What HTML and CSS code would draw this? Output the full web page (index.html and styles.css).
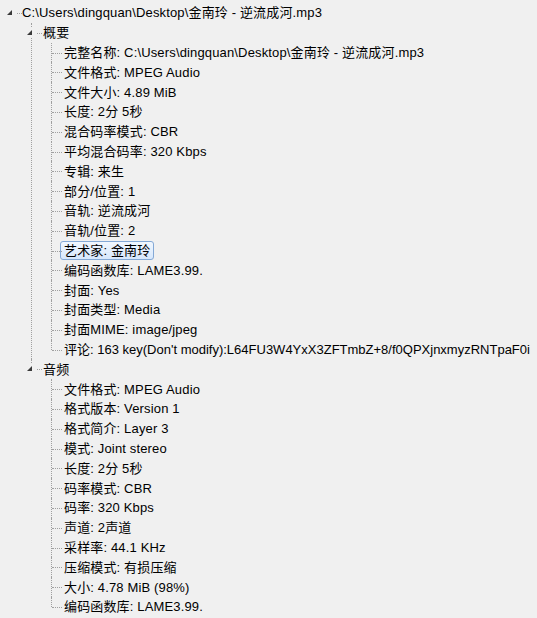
FILE: index.html
```html
<!DOCTYPE html>
<html lang="zh-CN">
<head>
    <meta charset="UTF-8">
    <meta name="viewport" content="width=device-width, initial-scale=1.0">
    <title>媒体信息</title>
    <link rel="stylesheet" href="styles.css">
</head>
<body>
    <ul class="tree">
        <li>
            <div class="row"><span class="toggle"></span><span class="label">C:\Users\dingquan\Desktop\金南玲 - 逆流成河.mp3</span></div>
            <ul>
                <li>
                    <div class="row"><span class="toggle"></span><span class="label">概要</span></div>
                    <ul>
                        <li><div class="row"><span class="label">完整名称: C:\Users\dingquan\Desktop\金南玲 - 逆流成河.mp3</span></div></li>
                        <li><div class="row"><span class="label">文件格式: MPEG Audio</span></div></li>
                        <li><div class="row"><span class="label">文件大小: 4.89 MiB</span></div></li>
                        <li><div class="row"><span class="label">长度: 2分 5秒</span></div></li>
                        <li><div class="row"><span class="label">混合码率模式: CBR</span></div></li>
                        <li><div class="row"><span class="label">平均混合码率: 320 Kbps</span></div></li>
                        <li><div class="row"><span class="label">专辑: 来生</span></div></li>
                        <li><div class="row"><span class="label">部分/位置: 1</span></div></li>
                        <li><div class="row"><span class="label">音轨: 逆流成河</span></div></li>
                        <li><div class="row"><span class="label">音轨/位置: 2</span></div></li>
                        <li><div class="row selected"><span class="label">艺术家: 金南玲</span></div></li>
                        <li><div class="row"><span class="label">编码函数库: LAME3.99.</span></div></li>
                        <li><div class="row"><span class="label">封面: Yes</span></div></li>
                        <li><div class="row"><span class="label">封面类型: Media</span></div></li>
                        <li><div class="row"><span class="label">封面MIME: image/jpeg</span></div></li>
                        <li><div class="row"><span class="label long">评论: 163 key(Don't modify):L64FU3W4YxX3ZFTmbZ+8/f0QPXjnxmyzRNTpaF0i</span></div></li>
                    </ul>
                </li>
                <li>
                    <div class="row"><span class="toggle"></span><span class="label">音频</span></div>
                    <ul>
                        <li><div class="row"><span class="label">文件格式: MPEG Audio</span></div></li>
                        <li><div class="row"><span class="label">格式版本: Version 1</span></div></li>
                        <li><div class="row"><span class="label">格式简介: Layer 3</span></div></li>
                        <li><div class="row"><span class="label">模式: Joint stereo</span></div></li>
                        <li><div class="row"><span class="label">长度: 2分 5秒</span></div></li>
                        <li><div class="row"><span class="label">码率模式: CBR</span></div></li>
                        <li><div class="row"><span class="label">码率: 320 Kbps</span></div></li>
                        <li><div class="row"><span class="label">声道: 2声道</span></div></li>
                        <li><div class="row"><span class="label">采样率: 44.1 KHz</span></div></li>
                        <li><div class="row"><span class="label">压缩模式: 有损压缩</span></div></li>
                        <li><div class="row"><span class="label">大小: 4.78 MiB (98%)</span></div></li>
                        <li><div class="row"><span class="label">编码函数库: LAME3.99.</span></div></li>
                    </ul>
                </li>
            </ul>
        </li>
    </ul>
</body>
</html>
```

FILE: styles.css
```css
html, body {
    margin: 0;
    padding: 0;
    background: #f0f0f0;
    overflow: hidden;
}

body {
    padding-top: 3px;
    font-family: "Liberation Sans", "Noto Sans CJK SC", sans-serif;
    font-size: 13px;
    letter-spacing: 0.15px;
    color: #000;
}

.tree,
.tree ul {
    list-style: none;
    margin: 0;
    padding: 0;
}

.tree ul {
    padding-left: 20px;
}

.tree li {
    position: relative;
}

/* vertical line joining siblings */
.tree ul > li::before {
    content: '';
    position: absolute;
    left: 11px;
    top: 0;
    bottom: 0;
    border-left: 1px dotted #a0a0a0;
}

.tree ul > li:last-child::before {
    bottom: auto;
    height: 10px;
}

.row {
    position: relative;
    height: 19.8px;
    display: flex;
    align-items: center;
    padding-left: 22px;
    white-space: nowrap;
}

.tree ul .row {
    padding-left: 23px;
}

.tree ul ul .row {
    padding-left: 24px;
}

/* horizontal stub */
.row::before {
    content: '';
    position: absolute;
    left: 12px;
    top: 10px;
    width: 10px;
    border-top: 1px dotted #a0a0a0;
}

.toggle {
    position: absolute;
    left: 6px;
    top: 5px;
    width: 10px;
    height: 10px;
    background: #f0f0f0;
    z-index: 1;
}

.toggle::after {
    content: '';
    position: absolute;
    left: 1px;
    top: 2px;
    width: 0;
    height: 0;
    border-style: solid;
    border-width: 0 0 5px 5px;
    border-color: transparent transparent #3a3a3a transparent;
}

.label {
    line-height: 17px;
}

.label.long {
    letter-spacing: 0;
}

.selected .label {
    margin-left: -4px;
    padding: 0 3px;
    border: 1px solid #84a9d6;
    border-radius: 3px;
    background: linear-gradient(#f1f7fe, #d6e7fc);
}
```
